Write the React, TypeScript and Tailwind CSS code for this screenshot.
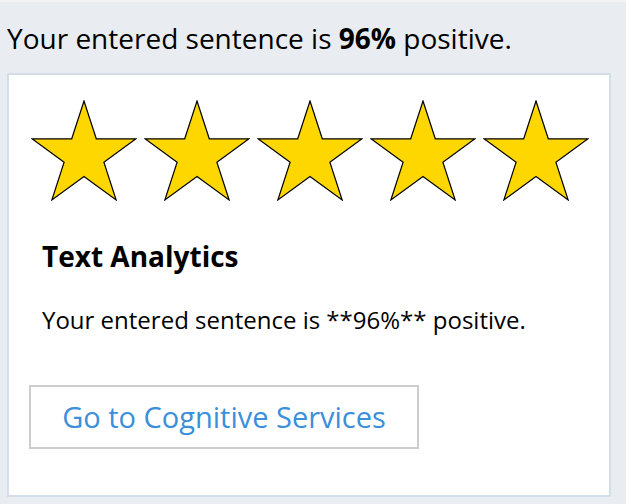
import React from "react";

const STAR_POINTS =
  "52,0 64.28,37.79 104.02,37.8 71.88,61.16 84.15,98.95 52,75.6 19.85,98.95 32.12,61.16 -0.02,37.8 39.72,37.79";

function Star() {
  return (
    <svg width="106" height="101" viewBox="-1 -1 106 101" className="block shrink-0">
      <polygon points={STAR_POINTS} fill="#ffd700" stroke="#000000" strokeWidth="1.2" strokeLinejoin="miter" />
    </svg>
  );
}

export default function App() {
  const font = { fontFamily: '"Open Sans", "Noto Sans", sans-serif' };
  return (
    <div className="w-[626px] h-[504px] bg-[#e9edf1] border-t-2 border-[#f3f4f5] overflow-hidden" style={font}>
      <p className="px-[7px] pt-[17px] text-[28px] leading-[38px] text-black">
        Your entered sentence is <b>96%</b> positive.
      </p>

      <div className="mx-[7px] mt-[16px] w-[604px] h-[424px] bg-white border-2 border-[#d4dee8] px-[20px] pt-[25px]">
        {/* rating */}
        <div className="flex gap-[7px] ml-[2px]">
          {[0, 1, 2, 3, 4].map((i) => (
            <Star key={i} />
          ))}
        </div>

        <div className="px-[13px]">
          <h2 className="mt-[36px] text-[28px] leading-[38px] font-bold text-black">Text Analytics</h2>
          <p className="mt-[29px] text-[24px] leading-[32px] text-black">
            Your entered sentence is **96%** positive.
          </p>
        </div>

        <button className="mt-[49px] w-[390px] h-[64px] border-2 border-[#cccccc] bg-white text-[29px] text-[#3b8fdb] flex items-center justify-center">
          Go to Cognitive Services
        </button>
      </div>
    </div>
  );
}
